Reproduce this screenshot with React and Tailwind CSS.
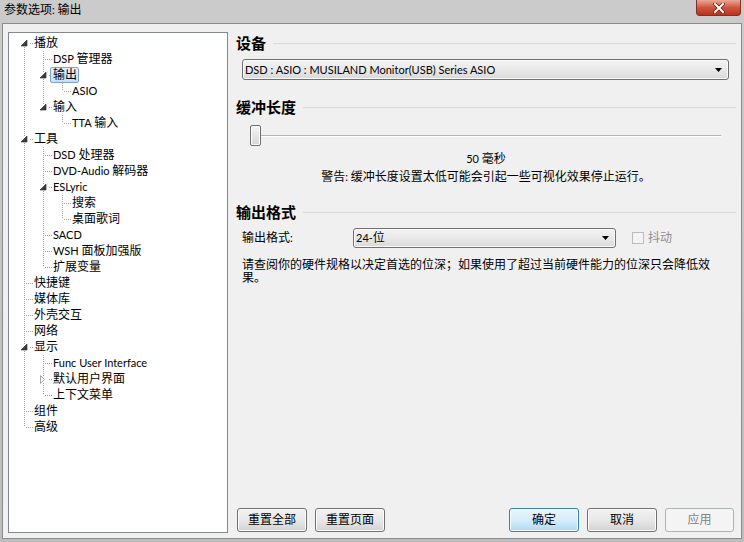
import React from 'react'

const FONT = "font-['Lato','Noto_Sans_CJK_SC',sans-serif]"

// Latin runs are set a touch smaller so they keep the narrow Segoe-like width
function T({ s }) {
  return (
    <span>
      {s.split(/([\u0000-\u02ff]+)/).filter(Boolean).map((p, i) =>
        /^[\u0000-\u02ff]+$/.test(p) ? <span key={i} className="text-[11px]">{p}</span> : <span key={i}>{p}</span>
      )}
    </span>
  )
}

const tree = [
  { t: '播放', open: true, c: [
    { t: 'DSP 管理器' },
    { t: '输出', sel: true, open: true, c: [{ t: 'ASIO' }] },
    { t: '输入', open: true, c: [{ t: 'TTA 输入' }] },
  ] },
  { t: '工具', open: true, c: [
    { t: 'DSD 处理器' },
    { t: 'DVD-Audio 解码器' },
    { t: 'ESLyric', open: true, c: [{ t: '搜索' }, { t: '桌面歌词' }] },
    { t: 'SACD' },
    { t: 'WSH 面板加强版' },
    { t: '扩展变量' },
  ] },
  { t: '快捷键' },
  { t: '媒体库' },
  { t: '外壳交互' },
  { t: '网络' },
  { t: '显示', open: true, c: [
    { t: 'Func User Interface' },
    { t: '默认用户界面', closed: true },
    { t: '上下文菜单' },
  ] },
  { t: '组件' },
  { t: '高级' },
]

function flatten(nodes, depth = 0, lines = [], out = []) {
  nodes.forEach((n, i) => {
    const last = i === nodes.length - 1
    out.push({ ...n, depth, lines, last, first: depth === 0 && i === 0 })
    if (n.c) flatten(n.c, depth + 1, [...lines, !last], out)
  })
  return out
}

const rows = flatten(tree)

function dots(x0, x1, y0, y1) {
  const r = []
  for (let x = x0; x <= x1; x++)
    for (let y = y0; y <= y1; y++)
      if ((x + y) % 2 === 0) r.push(<rect key={x + '-' + y} x={x} y={y} width="1" height="1" />)
  return r
}

function LineCell({ on }) {
  return (
    <svg width="19" height="16" className="shrink-0" fill="#a0a0a0">
      {on && dots(10, 10, 0, 15)}
    </svg>
  )
}

function OwnCell({ row }) {
  const hasGlyph = row.open || row.closed
  return (
    <svg width="19" height="16" className="shrink-0">
      <g fill="#a0a0a0">
        {!row.first && dots(10, 10, 0, hasGlyph ? 4 : 7)}
        {!row.last && dots(10, 10, hasGlyph ? 12 : 8, 15)}
        {dots(hasGlyph ? 16 : 11, 18, 8, 8)}
      </g>
      {row.open && <polygon points="13,5 13,11 7,11" fill="#3c3c3c" stroke="#262626" strokeWidth="0.6" />}
      {row.closed && <polygon points="7.5,4.5 11.5,8.5 7.5,12.5" fill="#fff" stroke="#a6a6a6" />}
    </svg>
  )
}

function TreeRow({ row }) {
  return (
    <div className="flex h-4 items-center">
      {row.lines.map((on, i) => <LineCell key={i} on={on} />)}
      <OwnCell row={row} />
      {row.sel ? (
        <span className="-ml-[2px] h-4 flex items-center pl-[2px] pr-[1px] border border-[#7da2ce] rounded-[2px] bg-linear-to-b from-[#e4effd] to-[#c6defc] leading-none whitespace-nowrap">
          <T s={row.t} />
        </span>
      ) : (
        <span className="ml-[1px] leading-none whitespace-nowrap"><T s={row.t} /></span>
      )}
    </div>
  )
}

function Heading({ children }) {
  return (
    <div className="flex h-5 items-center">
      <span className="text-[15px] font-bold leading-none">{children}</span>
      <div className="ml-[7px] flex-1 border-t border-[#d8d8d8]" />
    </div>
  )
}

function Combo({ children, className }) {
  return (
    <div className={`flex items-center border border-[#707070] rounded-[3px] bg-linear-to-b from-[#f3f3f3] via-[#e9e9e9] to-[#d9d9d9] shadow-[inset_0_0_0_1px_#fbfbfb] pl-[2px] pr-[6px] ${className}`}>
      <span className="flex-1 leading-none whitespace-nowrap"><T s={children} /></span>
      <svg width="7" height="4" viewBox="0 0 7 4"><polygon points="0,0 7,0 3.5,4" fill="#000" /></svg>
    </div>
  )
}

function Btn({ children, kind = 'normal', w = 'w-[70px]' }) {
  const k = {
    normal: 'border-[#707070] bg-linear-to-b from-[#f2f2f2] via-[#e8e8e8] to-[#d2d2d2] shadow-[inset_0_0_0_1px_#fcfcfc] text-black',
    focus: 'border-[#3c7fb1] bg-linear-to-b from-[#eaf6fd] via-[#d6eefb] to-[#aedaf3] shadow-[inset_0_0_0_1px_#f4fbfe] text-black',
    disabled: 'border-[#adb2b5] bg-[#f4f4f4] text-[#838383]',
  }[kind]
  return (
    <div className={`${w} h-6 flex items-center justify-center rounded-[3px] border leading-none ${k}`}>
      {children}
    </div>
  )
}

export default function App() {
  return (
    <div className={`w-[744px] h-[542px] flex flex-col bg-linear-to-b from-[#cbcbcb] to-[#bdbdbd] text-[12px] text-black ${FONT}`}>
      {/* title bar */}
      <div className="h-[23px] flex items-start shrink-0">
        <span className="ml-[4px] mt-[3px] leading-[14px]"><T s="参数选项: 输出" /></span>
        <div className="ml-auto mr-[3px] w-[45px] h-4 rounded-b-[4px] border border-t-0 border-[#7e3024] bg-linear-to-b from-[#e9a796] via-[#d0553e] to-[#b9321c] flex items-center justify-center">
          <svg width="12" height="10" viewBox="0 0 12 10">
            <path d="M2 1 L10 9 M10 1 L2 9" stroke="#5a1a10" strokeWidth="3.4" strokeLinecap="square" />
            <path d="M2 1 L10 9 M10 1 L2 9" stroke="#fff" strokeWidth="2" strokeLinecap="square" />
          </svg>
        </div>
      </div>

      {/* body */}
      <div className="flex-1 mx-[2px] mb-[3px] border border-[#8b8b8b] bg-[#f0f0f0] flex">
        {/* tree */}
        <div className="ml-[5px] mt-[8px] mb-[5px] w-[220px] border border-[#828790] bg-white pl-[5px] pt-[2px]">
          {rows.map((r, i) => <TreeRow key={i} row={r} />)}
        </div>

        {/* settings pane */}
        <div className="ml-[8px] mr-[5px] flex-1 flex flex-col pt-[9px] pb-[6px]">
          <Heading>设备</Heading>
          <Combo className="mt-[6px] ml-[6px] mr-[7px] h-[21px]">DSD : ASIO : MUSILAND Monitor(USB) Series ASIO</Combo>

          <div className="mt-[17px]"><Heading>缓冲长度</Heading></div>
          <div className="mt-[8px] ml-[14px] mr-[15px] h-[21px] flex items-center">
            <div className="w-[11px] h-[21px] shrink-0 rounded-[2px] border border-[#707070] bg-linear-to-b from-[#f5f5f5] to-[#d8d8d8] shadow-[inset_0_0_0_1px_#fcfcfc]" />
            <div className="flex-1 h-[2px] border-t border-[#b5b5b5] border-b border-b-white bg-[#e0e0e0]" />
          </div>
          <div className="mt-[5px] h-4 flex items-center justify-center leading-none"><T s="50 毫秒" /></div>
          <div className="mt-[2px] h-4 flex items-center justify-center leading-none"><T s="警告: 缓冲长度设置太低可能会引起一些可视化效果停止运行。" /></div>

          <div className="mt-[17px]"><Heading>输出格式</Heading></div>
          <div className="mt-[6px] ml-[6px] h-5 flex items-center">
            <span className="w-[111px] leading-none"><T s="输出格式:" /></span>
            <Combo className="w-[263px] h-5">24-位</Combo>
            <div className="ml-[16px] w-[12px] h-[12px] border border-[#bcbcbc] bg-[#f4f4f4]" />
            <span className="ml-[4px] leading-none text-[#8d8d8d]">抖动</span>
          </div>
          <p className="mt-[10px] ml-[6px] mr-[18px] leading-[13px]">
            请查阅你的硬件规格以决定首选的位深；如果使用了超过当前硬件能力的位深只会降低效果。
          </p>

          <div className="mt-auto ml-[1px] flex items-center">
            <Btn>重置全部</Btn>
            <div className="ml-[8px]"><Btn>重置页面</Btn></div>
            <div className="ml-auto"><Btn kind="focus">确定</Btn></div>
            <div className="ml-[8px]"><Btn>取消</Btn></div>
            <div className="ml-[8px] mr-[2px]"><Btn kind="disabled" w="w-[69px]">应用</Btn></div>
          </div>
        </div>
      </div>
    </div>
  )
}
